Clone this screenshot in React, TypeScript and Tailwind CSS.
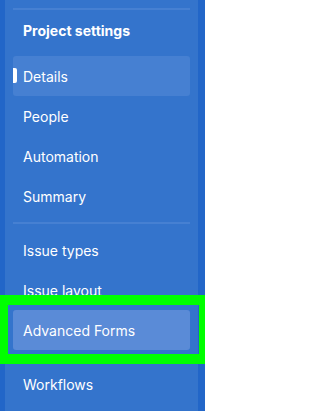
import React from "react";

const font = { fontFamily: "Inter, 'Liberation Sans', sans-serif" };

function Item({ label, active, highlight, indicator, className = "" }: { label: string; active?: boolean; highlight?: boolean; indicator?: boolean; className?: string }) {
  return (
    <div
      className={
        "relative h-[40px] rounded-[3px] px-[10px] flex items-center text-[14px] text-white " +
        (active ? "bg-[#4680d2] " : "") +
        (highlight ? "bg-[#5a8bd7] " : "") +
        className
      }
    >
      {indicator && <div className="absolute left-0 top-[12px] w-[4px] h-[15px] rounded-r-[2px] bg-white" />}
      <span>{label}</span>
    </div>
  );
}

export default function App() {
  return (
    <div className="relative w-[205px] h-[411px] bg-[#2266c8] flex overflow-hidden" style={font}>
      <div className="ml-[5px] w-[193px] h-full bg-[#3474cc] px-[8px] pt-[8px] flex flex-col">
        <div className="h-[2px] bg-[#4680d2]" />
        <div className="mt-[11px] h-[20px] leading-[20px] px-[10px] text-[14px] font-bold text-white mb-[15px]">Project settings</div>
        <Item label="Details" active indicator />
        <Item label="People" />
        <Item label="Automation" />
        <Item label="Summary" />
        <div className="mt-[6px] mb-[6px] h-[2px] bg-[#4680d2]" />
        <Item label="Issue types" />
        <Item label="Issue layout" />
        <Item label="Advanced Forms" highlight />
        <Item label="Workflows" className="mt-[14px]" />
      </div>
      <div className="absolute left-0 top-[295px] w-[205px] h-[69px] border-solid border-[#00ff00] border-l-[8px] border-t-[10px] border-r-[6px] border-b-[10px]" />
    </div>
  );
}
